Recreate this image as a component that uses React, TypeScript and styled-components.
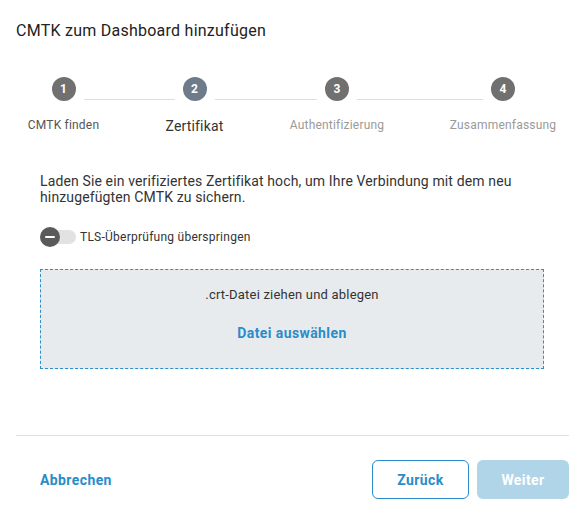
import React from "react";
import styled, { createGlobalStyle } from "styled-components";

const GlobalStyle = createGlobalStyle`
  html, body { margin: 0; padding: 0; background: #fff; }
  body { font-family: Roboto, "Noto Sans", Arial, sans-serif; color: #333; }
  * { box-sizing: border-box; }
`;

const Dialog = styled.div`
  width: 586px;
  height: 522px;
  display: flex;
  flex-direction: column;
  padding: 0 17px 0 16px;
`;

const Title = styled.h2`
  margin: 0;
  padding-top: 21px;
  height: 77px;
  font-size: 16px;
  font-weight: 400;
  line-height: 20px;
  letter-spacing: 0.25px;
  color: #222;
`;

const Stepper = styled.div`
  display: grid;
  grid-template-columns: 71px 57px 94px 104px;
  grid-template-rows: 24px auto;
  column-gap: 67px;
  row-gap: 16px;
  margin-left: 12px;
`;

const Circle = styled.div<{ $col: number; $active?: boolean }>`
  grid-row: 1;
  grid-column: ${(p) => p.$col};
  justify-self: center;
  width: 24px;
  height: 24px;
  border-radius: 50%;
  background: ${(p) => (p.$active ? "#6e7b8b" : "#707070")};
  color: #fff;
  font-size: 12px;
  font-weight: 700;
  display: flex;
  align-items: center;
  justify-content: center;
`;

const Connector = styled.div<{ $col: number; $ml: number; $mr: number }>`
  grid-row: 1;
  grid-column: ${(p) => p.$col} / span 2;
  align-self: end;
  height: 1px;
  margin-bottom: 1px;
  margin-left: ${(p) => p.$ml}px;
  margin-right: ${(p) => p.$mr}px;
  background: #dedede;
`;

const StepLabel = styled.div<{ $col: number; $state: "done" | "active" | "todo" }>`
  grid-row: 2;
  grid-column: ${(p) => p.$col};
  justify-self: center;
  white-space: nowrap;
  letter-spacing: ${(p) => (p.$state === "active" ? "0.15px" : "0.2px")};
  font-size: ${(p) => (p.$state === "active" ? "14px" : "12px")};
  line-height: ${(p) => (p.$state === "active" ? "18px" : "14px")};
  margin-top: ${(p) => (p.$state === "active" ? "0px" : "1px")};
  color: ${(p) =>
    p.$state === "done" ? "#555" : p.$state === "active" ? "#333" : "#9a9a9a"};
`;

const Content = styled.div`
  padding: 0 25px 0 24px;
  display: flex;
  flex-direction: column;
`;

const Description = styled.p`
  margin: 38px 0 0;
  font-size: 14px;
  line-height: 16px;
  letter-spacing: 0.13px;
  color: #333;
`;

const ToggleRow = styled.label`
  display: flex;
  align-items: center;
  gap: 4px;
  margin-top: 22px;
  height: 20px;
  font-size: 12px;
  letter-spacing: 0.25px;
  color: #333;
`;

const Track = styled.span`
  position: relative;
  width: 36px;
  height: 14px;
  border-radius: 7px;
  background: #e2e2e2;
  display: flex;
  align-items: center;
`;

const Thumb = styled.span`
  position: absolute;
  left: 0;
  top: -3px;
  width: 20px;
  height: 20px;
  border-radius: 50%;
  background: #5a5a5a;
  display: flex;
  align-items: center;
  justify-content: center;
  &::after {
    content: "";
    width: 10px;
    height: 2px;
    background: #fff;
    border-radius: 1px;
  }
`;

const DropZone = styled.div`
  margin-top: 22px;
  height: 100px;
  background: #e8ebee;
  border: 1px dashed #2b8fcb;
  display: flex;
  flex-direction: column;
  align-items: center;
  padding-top: 16px;
  gap: 20px;
`;

const DropText = styled.div`
  font-size: 13px;
  line-height: 18px;
  letter-spacing: 0.2px;
  color: #333;
`;

const LinkButton = styled.button`
  border: 0;
  background: none;
  padding: 0;
  font-family: inherit;
  font-size: 14px;
  line-height: 18px;
  font-weight: 700;
  letter-spacing: 0.4px;
  color: #2a8cc8;
  cursor: pointer;
`;

const Divider = styled.hr`
  margin: 66px 0 0;
  border: 0;
  border-top: 1px solid #e0e0e0;
`;

const Footer = styled.div`
  display: flex;
  align-items: center;
  padding: 24px 0 0 24px;
`;

const Spacer = styled.div`
  flex: 1;
`;

const Button = styled.button<{ $variant: "outline" | "disabled" }>`
  height: 39px;
  border-radius: 6px;
  font-family: inherit;
  font-size: 14px;
  font-weight: 700;
  letter-spacing: 0.4px;
  ${(p) =>
    p.$variant === "outline"
      ? `width: 97px; border: 1px solid #2a8cc8; background: #fff; color: #2a8cc8;`
      : `width: 92px; margin-left: 8px; border: 0; background: #b0d4e8; color: #fff;`}
`;

const steps = [
  { n: 1, label: "CMTK finden", state: "done" as const, w: 71 },
  { n: 2, label: "Zertifikat", state: "active" as const, w: 57 },
  { n: 3, label: "Authentifizierung", state: "todo" as const, w: 94 },
  { n: 4, label: "Zusammenfassung", state: "todo" as const, w: 104 },
];

export default function App() {
  return (
    <>
      <GlobalStyle />
      <Dialog>
        <Title>CMTK zum Dashboard hinzufügen</Title>
        <Stepper>
          {steps.map((s, i) => (
            <React.Fragment key={s.n}>
              <Circle $col={i + 1} $active={s.state === "active"}>
                {s.n}
              </Circle>
              {i < steps.length - 1 && (
                <Connector
                  $col={i + 1}
                  $ml={s.w / 2 + 20}
                  $mr={steps[i + 1].w / 2 + 20}
                />
              )}
              <StepLabel $col={i + 1} $state={s.state}>
                {s.label}
              </StepLabel>
            </React.Fragment>
          ))}
        </Stepper>
        <Content>
          <Description>
            Laden Sie ein verifiziertes Zertifikat hoch, um Ihre Verbindung mit dem neu
            hinzugefügten CMTK zu sichern.
          </Description>
          <ToggleRow>
            <Track>
              <Thumb />
            </Track>
            TLS-Überprüfung überspringen
          </ToggleRow>
          <DropZone>
            <DropText>.crt-Datei ziehen und ablegen</DropText>
            <LinkButton>Datei auswählen</LinkButton>
          </DropZone>
        </Content>
        <Divider />
        <Footer>
          <LinkButton>Abbrechen</LinkButton>
          <Spacer />
          <Button $variant="outline">Zurück</Button>
          <Button $variant="disabled">Weiter</Button>
        </Footer>
      </Dialog>
    </>
  );
}
